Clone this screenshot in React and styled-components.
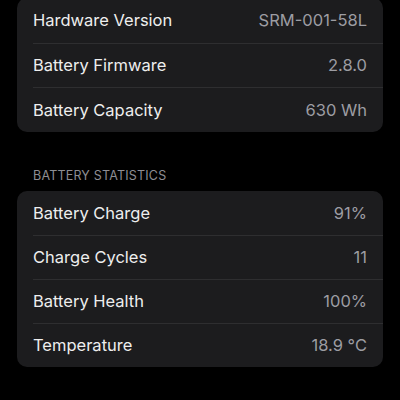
import styled, { createGlobalStyle } from "styled-components";

const GlobalStyle = createGlobalStyle`
  html, body {
    margin: 0;
    padding: 0;
    background: #000;
  }
  body {
    font-family: Inter, "Noto Sans", "Liberation Sans", sans-serif;
    -webkit-font-smoothing: antialiased;
  }
`;

const sections = [
  {
    title: null,
    rowHeight: 44.7,
    rows: [
      ["Hardware Version", "SRM-001-58L"],
      ["Battery Firmware", "2.8.0"],
      ["Battery Capacity", "630 Wh"],
    ],
  },
  {
    title: "Battery Statistics",
    rowHeight: 44,
    rows: [
      ["Battery Charge", "91%"],
      ["Charge Cycles", "11"],
      ["Battery Health", "100%"],
      ["Temperature", "18.9 °C"],
    ],
  },
];

const App = () => {
  return (
    <>
      <GlobalStyle />
      <Page>
        {sections.map((section, i) => (
          <Section key={i} $first={i === 0}>
            {section.title && <SectionTitle>{section.title}</SectionTitle>}
            <Card>
              {section.rows.map(([label, value], j) => (
                <Row key={label} $divider={j > 0} $height={section.rowHeight}>
                  <Label>{label}</Label>
                  <Value>{value}</Value>
                </Row>
              ))}
            </Card>
          </Section>
        ))}
      </Page>
    </>
  );
};

const Page = styled.div`
  width: 400px;
  height: 400px;
  overflow: hidden;
  padding: 0 17px;
  box-sizing: border-box;
  background: #000;
`;

const Section = styled.section`
  margin-top: ${(p) => (p.$first ? "-2px" : "35px")};
`;

const SectionTitle = styled.div`
  padding: 0 16px;
  margin-bottom: 6px;
  font-size: 12.5px;
  line-height: 18px;
  letter-spacing: 0.2px;
  text-transform: uppercase;
  color: #8d8d93;
`;

const Card = styled.div`
  background: #1c1c1e;
  border-radius: 10px;
  overflow: hidden;
`;

const Row = styled.div`
  position: relative;
  display: flex;
  align-items: center;
  justify-content: space-between;
  height: ${(p) => p.$height}px;
  padding: 0 16px;

  &::before {
    content: "";
    display: ${(p) => (p.$divider ? "block" : "none")};
    position: absolute;
    top: 0;
    left: 16px;
    right: 0;
    height: 1px;
    background: #2e2e30;
  }
`;

const Label = styled.span`
  font-size: 16.5px;
  color: #eeeeee;
`;

const Value = styled.span`
  font-size: 16.5px;
  color: #9d9da3;
`;

export default App;
